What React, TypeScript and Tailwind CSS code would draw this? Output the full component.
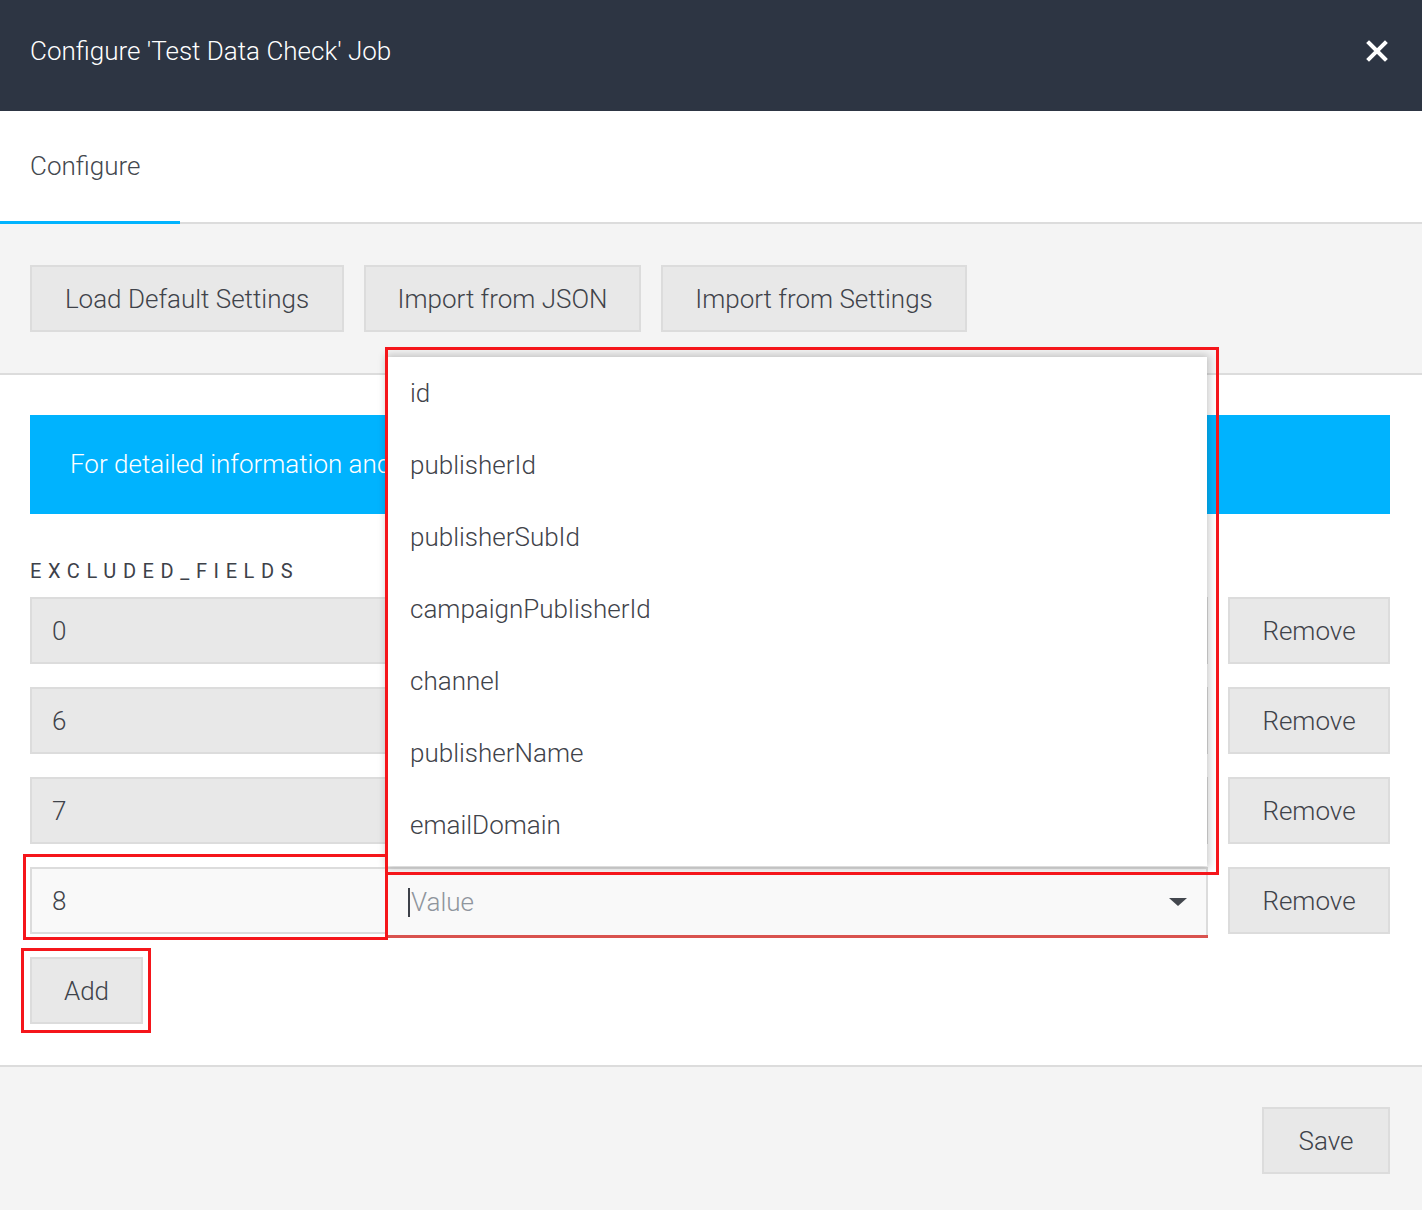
import React from "react";

const FONT = { fontFamily: "Roboto, 'Noto Sans', Arial, sans-serif" };

const fieldOptions = [
  "id",
  "publisherId",
  "publisherSubId",
  "campaignPublisherId",
  "channel",
  "publisherName",
  "emailDomain",
];

const rowKeys = ["0", "6", "7"];

function GrayButton({ children, className = "" }: { children: React.ReactNode; className?: string }) {
  return (
    <button
      className={
        "h-[67px] bg-[#e8e8e8] border-2 border-[#dcdcdc] text-[26px] font-light text-[#3f434a] flex items-center justify-center pt-[1px] " +
        className
      }
    >
      {children}
    </button>
  );
}

function CloseIcon() {
  return (
    <svg width="22" height="22" viewBox="0 0 22 22" aria-hidden="true">
      <path d="M3 3 L19 19 M19 3 L3 19" stroke="white" strokeWidth="4" strokeLinecap="square" />
    </svg>
  );
}

export default function App() {
  return (
    <div style={FONT} className="relative w-[1422px] h-[1210px] bg-white flex flex-col overflow-hidden">
      {/* Modal header */}
      <div className="h-[111px] shrink-0 bg-[#2d3543] pl-[30px] pr-[34px] flex items-center justify-between">
        <h1 className="text-[26px] font-light text-white pb-[8px]">Configure 'Test Data Check' Job</h1>
        <button className="pb-[10px]">
          <CloseIcon />
        </button>
      </div>

      {/* Tabs */}
      <div className="h-[113px] shrink-0 relative border-b-2 border-[#dcdcdc] flex">
        <div className="w-[180px] flex items-center pl-[30px] text-[26px] font-light text-[#43474e] relative">
          Configure
          <div className="absolute left-0 right-0 bottom-[-2px] h-[3px] bg-[#00b3fe]" />
        </div>
      </div>

      {/* Toolbar */}
      <div className="h-[151px] shrink-0 bg-[#f4f4f4] border-b-2 border-[#dcdcdc] pl-[30px] pt-[41px] flex gap-[20px] items-start">
        <GrayButton className="w-[314px]">Load Default Settings</GrayButton>
        <GrayButton className="w-[277px]">Import from JSON</GrayButton>
        <GrayButton className="w-[306px]">Import from Settings</GrayButton>
      </div>

      {/* Form body */}
      <div className="h-[692px] shrink-0 pl-[30px] pr-[32px] pt-[40px] flex flex-col border-b-2 border-[#dcdcdc]">
        <div className="h-[99px] bg-[#00b3fe] pl-[40px] flex items-center text-[26px] font-light text-white overflow-hidden whitespace-nowrap">
          <span className="w-[318px] overflow-hidden">For detailed information and examples</span>
        </div>

        <div className="mt-[47px] text-[20px] tracking-[0.33em] text-[#3d4149] leading-none">EXCLUDED_FIELDS</div>

        <div className="mt-[16px] flex flex-col gap-[23px]">
          {rowKeys.map((k) => (
            <div key={k} className="flex h-[67px]">
              <div className="w-[358px] bg-[#e8e8e8] border-2 border-[#dcdcdc] pl-[20px] pt-[2px] flex items-center text-[26px] font-light text-[#3f434a]">
                {k}
              </div>
              <div className="w-[820px] bg-[#e8e8e8] border-2 border-l-0 border-[#dcdcdc]" />
              <GrayButton className="ml-[20px] w-[162px]">Remove</GrayButton>
            </div>
          ))}

          {/* Row currently being edited */}
          <div className="flex h-[67px]">
            <div className="w-[358px] bg-[#f9f9f9] border-2 border-[#dcdcdc] pl-[20px] pt-[2px] flex items-center text-[26px] font-light text-[#3f434a]">
              8
            </div>
            <div className="w-[820px] h-[71px] flex flex-col">
              <div className="h-[68px] bg-[#f9f9f9] border-2 border-l-0 border-b-0 border-[#dcdcdc] pl-[20px] pr-[18px] flex items-center justify-between">
                <div className="flex items-center text-[26px] font-light">
                  <span className="w-[2px] h-[29px] bg-[#3d4149] mr-[1px]" />
                  <span className="text-[#8f959d]">Value</span>
                </div>
                <svg width="20" height="10" viewBox="0 0 20 10" aria-hidden="true">
                  <path d="M1 1 L19 1 L10 9 Z" fill="#43474e" />
                </svg>
              </div>
              <div className="h-[3px] bg-[#d9534f]" />
            </div>
            <GrayButton className="ml-[20px] w-[162px]">Remove</GrayButton>
          </div>
        </div>

        <GrayButton className="mt-[23px] w-[113px]">Add</GrayButton>
      </div>

      {/* Footer */}
      <div className="flex-1 bg-[#f4f4f4] pr-[32px] pt-[40px] flex justify-end items-start">
        <GrayButton className="w-[128px]">Save</GrayButton>
      </div>

      {/* Open options menu for the Value select */}
      <div className="absolute left-[388px] top-[357px] w-[819px] h-[509px] bg-white shadow-[0_0_8px_2px_rgba(0,0,0,0.22)] pb-[5px]">
        {fieldOptions.map((o) => (
          <div key={o} className="h-[72px] pl-[22px] flex items-center text-[26px] font-light text-[#3f434a]">
            {o}
          </div>
        ))}
      </div>

      {/* Highlight frames */}
      <div className="absolute left-[385px] top-[347px] w-[834px] h-[528px] border-[3px] border-[#f5161b] pointer-events-none" />
      <div className="absolute left-[23px] top-[854px] w-[365px] h-[86px] border-[3px] border-[#f5161b] pointer-events-none" />
      <div className="absolute left-[21px] top-[948px] w-[130px] h-[85px] border-[3px] border-[#f5161b] pointer-events-none" />
    </div>
  );
}
